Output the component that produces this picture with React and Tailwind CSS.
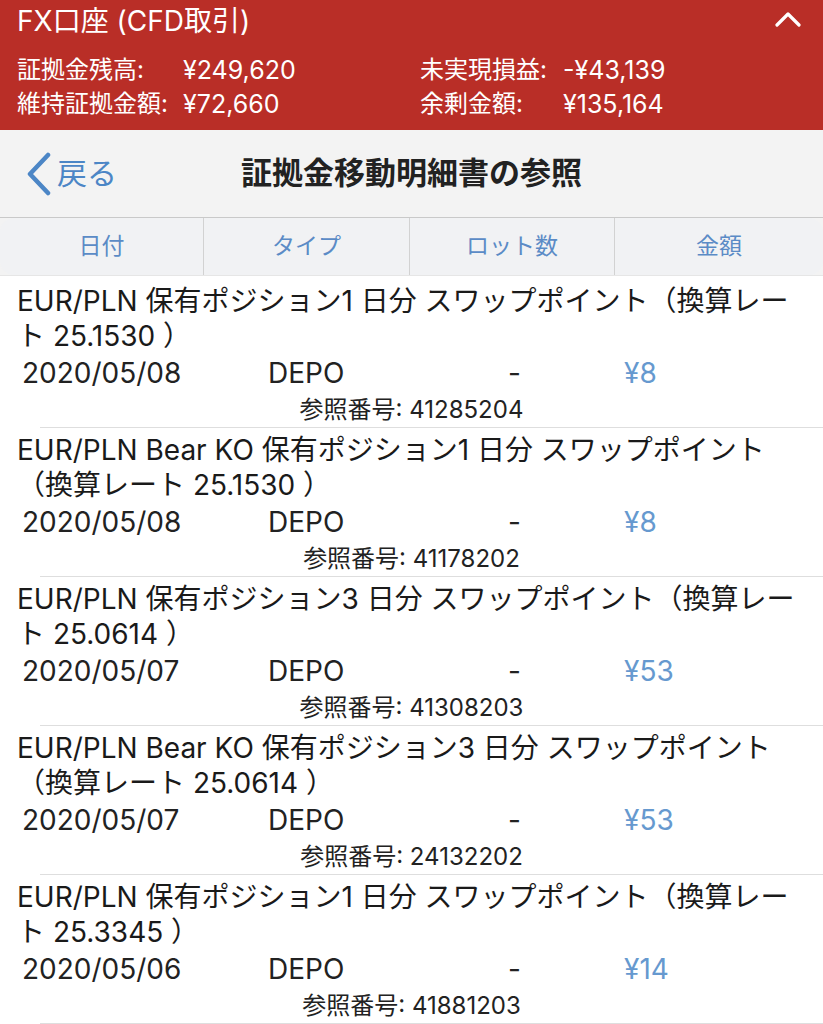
import React from 'react';

const entries = [
  {
    lines: ['EUR/PLN 保有ポジション1 日分 スワップポイント（換算レー', 'ト 25.1530 ）'],
    date: '2020/05/08',
    amount: '¥8',
    ref: '41285204',
  },
  {
    lines: ['EUR/PLN Bear KO 保有ポジション1 日分 スワップポイント', '（換算レート 25.1530 ）'],
    date: '2020/05/08',
    amount: '¥8',
    ref: '41178202',
  },
  {
    lines: ['EUR/PLN 保有ポジション3 日分 スワップポイント（換算レー', 'ト 25.0614 ）'],
    date: '2020/05/07',
    amount: '¥53',
    ref: '41308203',
  },
  {
    lines: ['EUR/PLN Bear KO 保有ポジション3 日分 スワップポイント', '（換算レート 25.0614 ）'],
    date: '2020/05/07',
    amount: '¥53',
    ref: '24132202',
  },
  {
    lines: ['EUR/PLN 保有ポジション1 日分 スワップポイント（換算レー', 'ト 25.3345 ）'],
    date: '2020/05/06',
    amount: '¥14',
    ref: '41881203',
  },
];

const tabs = ['日付', 'タイプ', 'ロット数', '金額'];

const App = () => {
  return (
    <div className="w-[823px] h-[1024px] overflow-hidden bg-white font-['Inter','Noto_Sans_CJK_JP',sans-serif]">
      {/* Account summary */}
      <div className="bg-[#b92e27] text-white h-[130px] pl-[17px] pr-[22px]">
        <div className="flex items-center justify-between h-[42px]">
          <span className="text-[28px] leading-none">FX口座 (CFD取引)</span>
          <svg width="26" height="16" viewBox="0 0 26 16" className="mt-[-2px]">
            <path d="M2 13 L13 2 L24 13" fill="none" stroke="white" strokeWidth="3.2" strokeLinecap="round" strokeLinejoin="round" />
          </svg>
        </div>
        <div className="grid grid-cols-[403px_1fr] text-[24px] leading-[34px] mt-[11px]">
          <div className="flex">
            <span className="w-[166px]">証拠金残高:</span>
            <span className="text-[25px]">¥249,620</span>
          </div>
          <div className="flex">
            <span className="w-[143px]">未実現損益:</span>
            <span className="text-[25px]">-¥43,139</span>
          </div>
          <div className="flex">
            <span className="w-[166px]">維持証拠金額:</span>
            <span className="text-[25px]">¥72,660</span>
          </div>
          <div className="flex">
            <span className="w-[143px]">余剰金額:</span>
            <span className="text-[25px]">¥135,164</span>
          </div>
        </div>
      </div>

      {/* Nav bar */}
      <div className="relative h-[88px] bg-[#f3f3f3] border-b border-[#c9c9c9] flex items-center justify-center">
        <div className="absolute left-[24px] top-0 h-full flex items-center text-[#4c86c6]">
          <svg width="30" height="44" viewBox="0 0 30 44">
            <path d="M24 3 L6 22 L24 41" fill="none" stroke="#4c86c6" strokeWidth="4.5" strokeLinecap="round" strokeLinejoin="round" />
          </svg>
          <span className="text-[30px] ml-[3px]">戻る</span>
        </div>
        <span className="text-[31px] font-bold text-[#222]">証拠金移動明細書の参照</span>
      </div>

      {/* Tabs */}
      <div className="grid grid-cols-[204px_206px_205px_1fr] h-[58px] bg-[#f3f3f3] border-b border-[#e6e6e6]">
        {tabs.map((t, i) => (
          <div
            key={t}
            className={
              'flex items-center justify-center text-[23px] text-[#5b8bc6] bg-[#f1f2f4] ' +
              (i < 3 ? 'border-r border-[#d2d2d2] ' : '') +
              (i === 0 ? 'rounded-bl-[14px] rounded-tl-[14px]' : '') +
              (i === 3 ? 'rounded-br-[14px] rounded-tr-[14px]' : '')
            }
          >
            {t}
          </div>
        ))}
      </div>

      {/* Entries */}
      <div>
        {entries.map((e, i) => (
          <div key={i} className={i === 0 ? 'pt-[6px]' : 'pt-[3px]'}>
            <div className="pl-[17px] text-[28px] leading-[35px] text-[#1a1a1a] pt-[2px]">
              {e.lines.map((l) => (
                <div key={l} className="whitespace-nowrap">{l}</div>
              ))}
            </div>
            <div className="flex pl-[22px] h-[38px] items-center text-[28px] text-[#222]">
              <span className="w-[246px]">{e.date}</span>
              <span className="w-[240px]">DEPO</span>
              <span className="w-[116px]">-</span>
              <span className="text-[#6699cf]">{e.amount}</span>
            </div>
            <div className="h-[35px] flex items-center justify-center text-[24px] text-[#222]">
              参照番号: {e.ref}
            </div>
            <div className="ml-[40px] border-b border-[#dedede]" />
          </div>
        ))}
      </div>
    </div>
  );
};

export default App;
